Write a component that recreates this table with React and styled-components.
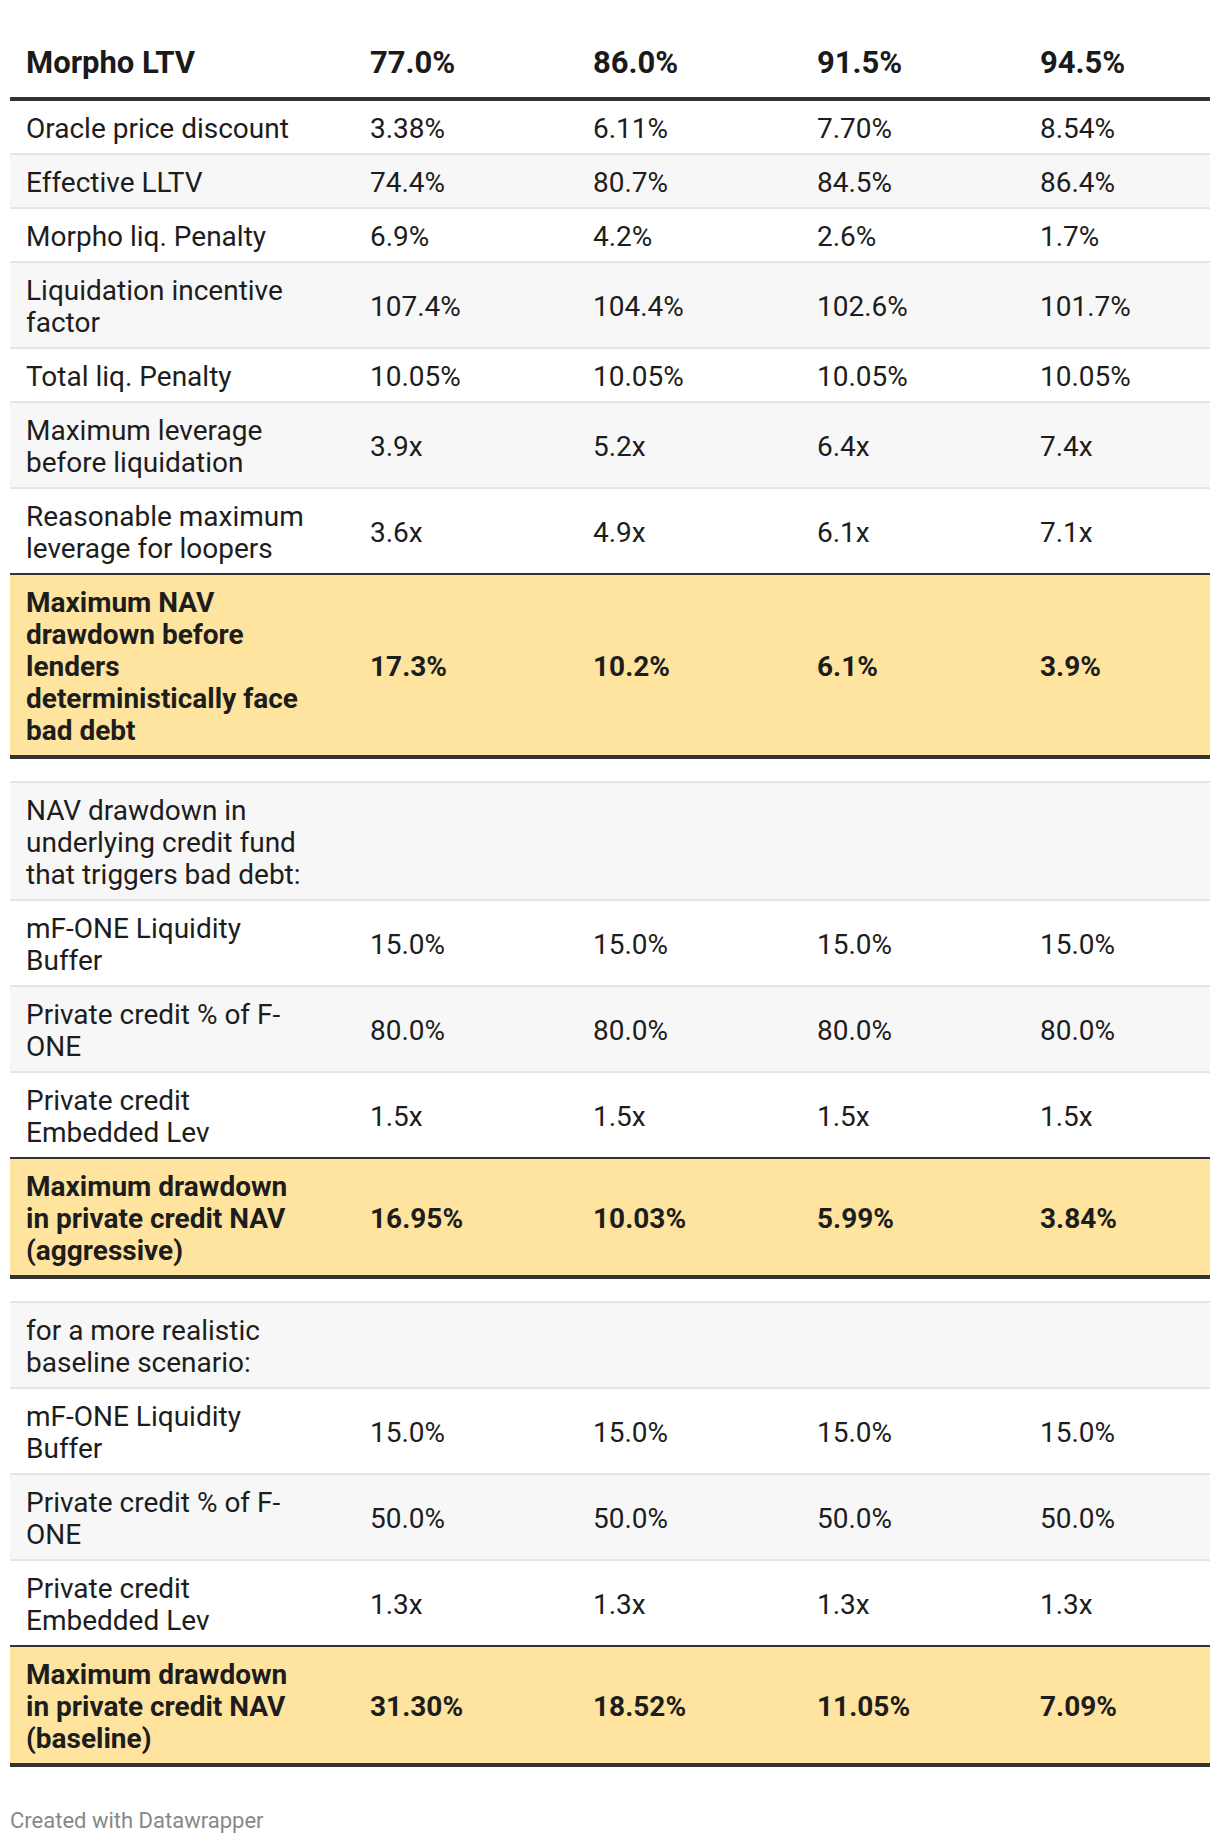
import React from 'react';
import styled, { createGlobalStyle } from 'styled-components';

const GlobalStyle = createGlobalStyle`
  body {
    margin: 0;
    background: #ffffff;
    font-family: Roboto, "Liberation Sans", Arial, sans-serif;
    color: #1d1d1d;
  }
`;

const Page = styled.div`
  padding: 37px 10px 0;
`;

const Table = styled.table`
  width: 1200px;
  table-layout: fixed;
  border-collapse: separate;
  border-spacing: 0;
  font-size: 28px;
  line-height: 32px;
`;

const HeadCell = styled.th`
  padding: 10px 16px 18px;
  text-align: left;
  font-size: 31px;
  font-weight: 700;
  color: #1a1a1a;
  border-bottom: 4px solid #333333;
`;

const Row = styled.tr`
  background: ${(p) => (p.$highlight ? '#fee49e' : p.$stripe ? '#f7f7f7' : '#ffffff')};
  font-weight: ${(p) => (p.$highlight ? 700 : 400)};
`;

const Cell = styled.td`
  padding: ${(p) => (p.$label ? '12px 44px 8px 16px' : '12px 16px 8px')};
  vertical-align: middle;
  height: ${(p) => (p.$spacer ? '2px' : 'auto')};
  border-bottom: ${(p) => p.$border} solid ${(p) => p.$borderColor};
  overflow-wrap: break-word;
`;

const Footer = styled.div`
  margin-top: 40px;
  font-size: 22px;
  line-height: 28px;
  color: #888888;
`;

const columns = [344, 223, 224, 223, 186];
const header = ['Morpho LTV', '77.0%', '86.0%', '91.5%', '94.5%'];

const same = (v) => [v, v, v, v];

const rows = [
  { label: 'Oracle price discount', values: ['3.38%', '6.11%', '7.70%', '8.54%'] },
  { label: 'Effective LLTV', values: ['74.4%', '80.7%', '84.5%', '86.4%'] },
  { label: 'Morpho liq. Penalty', values: ['6.9%', '4.2%', '2.6%', '1.7%'] },
  { label: 'Liquidation incentive factor', values: ['107.4%', '104.4%', '102.6%', '101.7%'] },
  { label: 'Total liq. Penalty', values: same('10.05%') },
  { label: 'Maximum leverage before liquidation', values: ['3.9x', '5.2x', '6.4x', '7.4x'] },
  { label: 'Reasonable maximum leverage for loopers', values: ['3.6x', '4.9x', '6.1x', '7.1x'] },
  {
    label: 'Maximum NAV drawdown before lenders deterministically face bad debt',
    values: ['17.3%', '10.2%', '6.1%', '3.9%'],
    highlight: true,
  },
  { spacer: true },
  { label: 'NAV drawdown in underlying credit fund that triggers bad debt:', values: same('') },
  { label: 'mF-ONE Liquidity Buffer', values: same('15.0%') },
  { label: 'Private credit % of F-ONE', values: same('80.0%') },
  { label: 'Private credit Embedded Lev', values: same('1.5x') },
  {
    label: 'Maximum drawdown in private credit NAV (aggressive)',
    values: ['16.95%', '10.03%', '5.99%', '3.84%'],
    highlight: true,
  },
  { spacer: true },
  { label: 'for a more realistic baseline scenario:', values: same('') },
  { label: 'mF-ONE Liquidity Buffer', values: same('15.0%') },
  { label: 'Private credit % of F-ONE', values: same('50.0%') },
  { label: 'Private credit Embedded Lev', values: same('1.3x') },
  {
    label: 'Maximum drawdown in private credit NAV (baseline)',
    values: ['31.30%', '18.52%', '11.05%', '7.09%'],
    highlight: true,
  },
];

const App = () => {
  return (
    <Page>
      <GlobalStyle />
      <Table>
        <colgroup>
          {columns.map((w, i) => (
            <col key={i} style={{ width: w }} />
          ))}
        </colgroup>
        <thead>
          <tr>
            {header.map((h, i) => (
              <HeadCell key={i}>{h}</HeadCell>
            ))}
          </tr>
        </thead>
        <tbody>
          {rows.map((row, i) => {
            const next = rows[i + 1];
            const border = row.highlight ? '4px' : '2px';
            const borderColor = row.highlight || (next && next.highlight) ? '#333333' : '#e6e6e6';
            const stripe = i % 2 === 1;
            if (row.spacer) {
              return (
                <Row key={i} $stripe={stripe}>
                  {columns.map((_, j) => (
                    <Cell key={j} $spacer $border={border} $borderColor={borderColor} />
                  ))}
                </Row>
              );
            }
            return (
              <Row key={i} $stripe={stripe} $highlight={row.highlight}>
                <Cell $label $border={border} $borderColor={borderColor}>
                  {row.label}
                </Cell>
                {row.values.map((v, j) => (
                  <Cell key={j} $border={border} $borderColor={borderColor}>
                    {v}
                  </Cell>
                ))}
              </Row>
            );
          })}
        </tbody>
      </Table>
      <Footer>Created with Datawrapper</Footer>
    </Page>
  );
};

export default App;
